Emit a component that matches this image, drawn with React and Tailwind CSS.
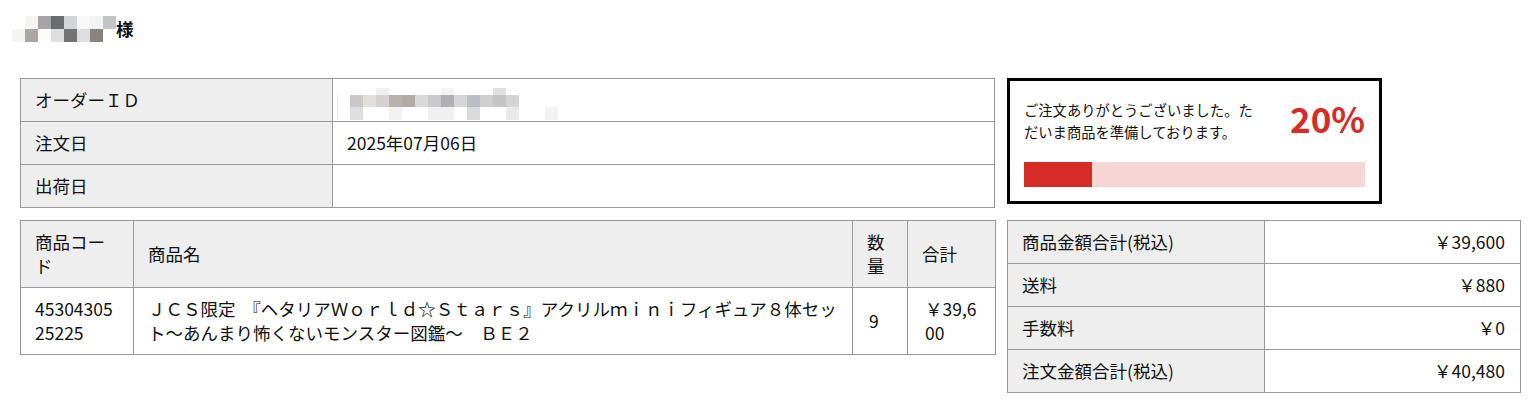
import React from "react";

const nameRow1 = ["bg-white", "bg-[#f6f3f0]", "bg-[#a4a4a7]", "bg-[#6b6c70]", "bg-[#d3d4d6]", "bg-[#f8f8f8]", "bg-[#f3f3f3]", "bg-[#c4c5c7]"];
const nameRow2 = ["bg-[#f4f4f2]", "bg-[#aaa6a3]", "bg-[#fdfcfa]", "bg-[#dcdfde]", "bg-[#737373]", "bg-[#dedede]", "bg-[#8a837b]", "bg-white"];

const idTop = ["bg-white", "bg-white", "bg-[#f0f0f0]", "bg-white", "bg-white", "bg-white", "bg-white", "bg-[#f2f2f2]", "bg-white", "bg-white", "bg-white", "bg-[#e0e0e0]", "bg-white"];
const idRow1 = ["bg-[#c8c8c8]", "bg-[#e3e0dc]", "bg-[#d3d3d3]", "bg-[#b8b2ad]", "bg-[#b3aaa4]", "bg-[#d9d9d9]", "bg-[#c9c9c9]", "bg-[#b0b0b3]", "bg-[#d6d6d6]", "bg-[#bdbec4]", "bg-[#cecece]", "bg-[#c5c5c5]", "bg-[#d4d4d4]"];
const idRow2 = ["bg-[#dedede]", "bg-white", "bg-white", "bg-[#f2f2f2]", "bg-white", "bg-white", "bg-[#f0f0f0]", "bg-[#f0f0f0]", "bg-white", "bg-[#dadadd]", "bg-white", "bg-white", "bg-[#e9e9ec]", "bg-white", "bg-white", "bg-[#f2f2f2]"];

const Blocks = ({ row, h = "h-[13px]" }) => (
  <div className="flex">
    {row.map((c, i) => (
      <div key={i} className={`w-[13px] shrink-0 ${h} ${c}`} />
    ))}
  </div>
);

const th = "border border-[#999] bg-[#eeeeee] px-[14px] py-[9px] text-left font-normal align-middle";
const td = "border border-[#999] bg-white px-[14px] py-[9px] align-middle";

const App = () => {
  return (
    <div className="min-h-[401px] bg-white text-[17.5px] leading-6 text-[#111] font-['Noto_Sans_CJK_JP','Noto_Sans',sans-serif] break-all">
      <div className="pl-3 pt-4 flex items-center">
        <div>
          <Blocks row={nameRow1} />
          <Blocks row={nameRow2} />
        </div>
        <span className="font-bold">様</span>
      </div>

      <div className="mt-9 pl-5 grid grid-cols-[975px_514px] gap-x-3 gap-y-3 items-start">
        <table className="w-[975px] table-fixed border-collapse">
          <tbody>
            <tr>
              <th className={`${th} w-[312px]`}>オーダーＩＤ</th>
              <td className={td}>
                <div className="flex items-start h-6 -ml-[10px] overflow-visible">
                  <div className="w-px h-[25px] mt-[7px] shrink-0 bg-[#e2e2e2]" />
                  <div className="ml-3">
                    <Blocks row={idTop} h="h-[7px]" />
                    <Blocks row={idRow1} h="h-[12px]" />
                    <Blocks row={idRow2} />
                  </div>
                </div>
              </td>
            </tr>
            <tr>
              <th className={th}>注文日</th>
              <td className={td}>2025年07月06日</td>
            </tr>
            <tr>
              <th className={th}>出荷日</th>
              <td className={td}>
                <span className="invisible">-</span>
              </td>
            </tr>
          </tbody>
        </table>

        <div className="w-[375px] h-[126px] border-[3px] border-black px-[14px] pt-[15px]">
          <div className="flex items-center justify-between">
            <p className="w-[240px] text-[14.3px] leading-[22px]">
              ご注文ありがとうございました。ただいま商品を準備しております。
            </p>
            <span className="mb-[6px] text-[35px] leading-[44px] font-bold text-[#d52c25]">20%</span>
          </div>
          <div className="mt-[16px] h-[25px] bg-[#f7d5d5]">
            <div className="h-full w-1/5 bg-[#d52c25]" />
          </div>
        </div>

        <table className="w-[975px] table-fixed border-collapse">
          <thead>
            <tr>
              <th className={`${th} w-[113px]`}>商品コード</th>
              <th className={`${th} w-[719px]`}>商品名</th>
              <th className={`${th} w-[55px]`}>数量</th>
              <th className={`${th} w-[88px]`}>合計</th>
            </tr>
          </thead>
          <tbody>
            <tr>
              <td className={td}>4530430525225</td>
              <td className={td}>
                ＪＣＳ限定&nbsp; 『ヘタリアＷｏｒｌｄ☆Ｓｔａｒｓ』アクリルｍｉｎｉフィギュア８体セット～あんまり怖くないモンスター図鑑～　ＢＥ２
              </td>
              <td className={`${td} pl-4`}>9</td>
              <td className={`${td} pl-[17px]`}>￥39,600</td>
            </tr>
          </tbody>
        </table>

        <table className="w-[514px] table-fixed border-collapse">
          <tbody>
            {[
              ["商品金額合計(税込)", "￥39,600"],
              ["送料", "￥880"],
              ["手数料", "￥0"],
              ["注文金額合計(税込)", "￥40,480"],
            ].map(([k, v]) => (
              <tr key={k}>
                <th className={`${th} w-[257px]`}>{k}</th>
                <td className={`${td} text-right pr-[15px]`}>{v}</td>
              </tr>
            ))}
          </tbody>
        </table>
      </div>
    </div>
  );
};

export default App;
